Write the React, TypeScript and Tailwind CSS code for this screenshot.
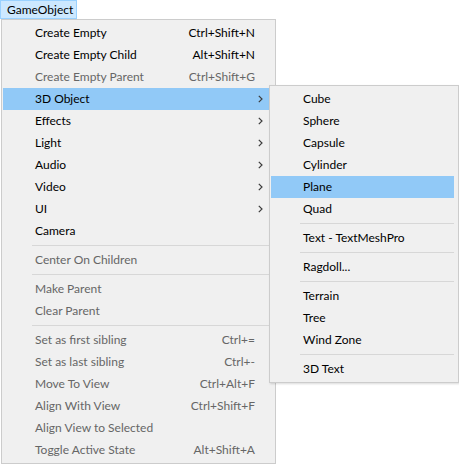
import React from 'react'

type Item =
  | { sep: true }
  | { label: string; shortcut?: string; disabled?: boolean; sub?: boolean; active?: boolean }

const mainItems: Item[] = [
  { label: 'Create Empty', shortcut: 'Ctrl+Shift+N' },
  { label: 'Create Empty Child', shortcut: 'Alt+Shift+N' },
  { label: 'Create Empty Parent', shortcut: 'Ctrl+Shift+G', disabled: true },
  { label: '3D Object', sub: true, active: true },
  { label: 'Effects', sub: true },
  { label: 'Light', sub: true },
  { label: 'Audio', sub: true },
  { label: 'Video', sub: true },
  { label: 'UI', sub: true },
  { label: 'Camera' },
  { sep: true },
  { label: 'Center On Children', disabled: true },
  { sep: true },
  { label: 'Make Parent', disabled: true },
  { label: 'Clear Parent', disabled: true },
  { sep: true },
  { label: 'Set as first sibling', shortcut: 'Ctrl+=', disabled: true },
  { label: 'Set as last sibling', shortcut: 'Ctrl+-', disabled: true },
  { label: 'Move To View', shortcut: 'Ctrl+Alt+F', disabled: true },
  { label: 'Align With View', shortcut: 'Ctrl+Shift+F', disabled: true },
  { label: 'Align View to Selected', disabled: true },
  { label: 'Toggle Active State', shortcut: 'Alt+Shift+A', disabled: true },
]

const subItems: Item[] = [
  { label: 'Cube' },
  { label: 'Sphere' },
  { label: 'Capsule' },
  { label: 'Cylinder' },
  { label: 'Plane', active: true },
  { label: 'Quad' },
  { sep: true },
  { label: 'Text - TextMeshPro' },
  { sep: true },
  { label: 'Ragdoll...' },
  { sep: true },
  { label: 'Terrain' },
  { label: 'Tree' },
  { label: 'Wind Zone' },
  { sep: true },
  { label: '3D Text' },
]

function Chevron() {
  return (
    <svg width="5" height="8" viewBox="0 0 5 8" className="shrink-0">
      <path d="M0.8 0.8 L4 4 L0.8 7.2" fill="none" stroke="#3c3c3c" strokeWidth="1.2" />
    </svg>
  )
}

function Rows({ items, showShortcut }: { items: Item[]; showShortcut?: boolean }) {
  return (
    <>
      {items.map((it, i) => {
        if ('sep' in it) {
          return (
            <div key={i} className="h-[7px] flex items-center pl-[30px] pr-[4px]">
              <div className="h-px w-full bg-[#d7d7d7]" />
            </div>
          )
        }
        const color = it.disabled ? 'text-[#666666]' : 'text-black'
        return (
          <div
            key={i}
            className={`h-[22px] flex items-center ml-px mr-[4px] pl-[32px] ${color} ${
              it.active ? 'bg-[#91c9f7]' : ''
            }`}
          >
            <span className="flex-1 whitespace-nowrap">{it.label}</span>
            {showShortcut && it.shortcut && (
              <span className="whitespace-nowrap pr-[16px]">{it.shortcut}</span>
            )}
            {it.sub && (
              <span className="pr-[8px]">
                <Chevron />
              </span>
            )}
          </div>
        )
      })}
    </>
  )
}

export default function App() {
  return (
    <div
      className="relative w-[459px] h-[464px] bg-white text-[12px] leading-none"
      style={{ fontFamily: '"Segoe UI", Lato, "Liberation Sans", sans-serif' }}
    >
      <div className="h-[19px] w-[77px] bg-[#cce8ff] border border-[#99d1ff] flex items-center pl-[6px] text-black">
        GameObject
      </div>
      <div className="ml-px w-[275px] border border-[#cccccc] bg-[#f0f0f0] py-[2px]">
        <Rows items={mainItems} showShortcut />
      </div>
      <div className="absolute left-[269px] top-[85px] w-[190px] border border-[#cccccc] bg-[#f0f0f0] py-[2px] shadow-[1px_1px_2px_rgba(0,0,0,0.15)]">
        <Rows items={subItems} />
      </div>
    </div>
  )
}
